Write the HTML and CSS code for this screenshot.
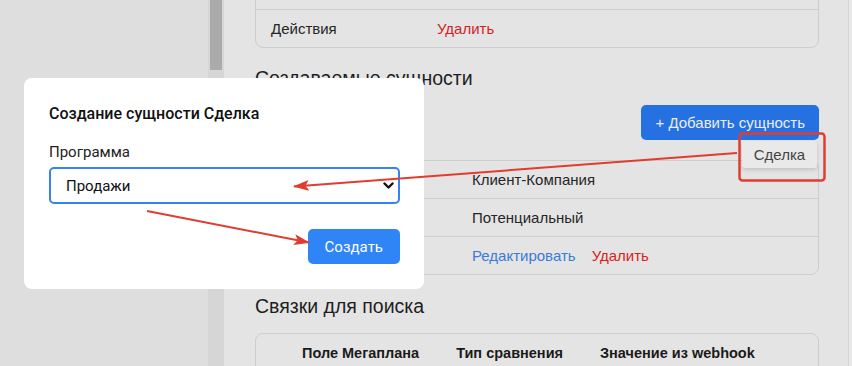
FILE: index.html
```html
<!DOCTYPE html>
<html lang="ru">
<head>
  <meta charset="UTF-8">
  <title>Создание сущности</title>
  <link rel="stylesheet" href="styles.css">
</head>
<body>

  <div class="page">
    <div class="sidebar"></div>
    <div class="scrollbar"><div class="thumb"></div></div>

    <div class="main">
      <div class="box box-first">
        <div class="row"></div>
        <div class="row"><span class="cell-name">Действия</span><a class="link-red">Удалить</a></div>
      </div>

      <h3 class="heading">Создаваемые сущности</h3>

      <div class="toolbar">
        <button class="btn-add">+ Добавить сущность</button>
        <div class="menu">Сделка</div>
      </div>

      <div class="box box-entities">
        <div class="row"><span class="cell-name">Тип</span><span>Клиент-Компания</span></div>
        <div class="row"><span class="cell-name">Статус</span><span>Потенциальный</span></div>
        <div class="row"><span class="cell-name">Действия</span><span class="actions"><a class="link-blue">Редактировать</a><a class="link-red">Удалить</a></span></div>
      </div>

      <h3 class="heading heading-search">Связки для поиска</h3>

      <div class="box box-search">
        <div class="row row-head">
          <span>Поле Мегаплана</span>
          <span>Тип сравнения</span>
          <span>Значение из webhook</span>
        </div>
        <div class="row"></div>
      </div>
    </div>
    <div class="edge"></div>
  </div>

  <!-- модальное окно -->
  <div class="modal">
    <h4 class="modal-title">Создание сущности Сделка</h4>
    <label class="modal-label" for="programma">Программа</label>
    <div class="select-wrap">
      <select id="programma" class="select">
        <option>Продажи</option>
      </select>
      <svg class="chevron" width="11" height="8" viewBox="0 0 11 8"><path d="M1.5 1.5l4 4 4-4" fill="none" stroke="#111" stroke-width="2.4" stroke-linecap="round" stroke-linejoin="round"/></svg>
    </div>
    <div class="modal-footer">
      <button class="btn-create">Создать</button>
    </div>
  </div>

  <!-- пометки поверх скриншота -->
  <svg class="marks" width="852" height="366" viewBox="0 0 852 366">
    <defs>
      <marker id="head" markerUnits="userSpaceOnUse" markerWidth="16" markerHeight="12" refX="15" refY="6" orient="auto">
        <path d="M0 0.5L16 6L0 11.5L3.5 6z" fill="#e23b30"/>
      </marker>
    </defs>
    <rect x="739.5" y="133.5" width="85" height="47" rx="3" fill="none" stroke="#e23b30" stroke-width="2.5"/>
    <line x1="737" y1="153" x2="294" y2="186.5" stroke="#e23b30" stroke-width="2" marker-end="url(#head)"/>
    <line x1="147" y1="211" x2="309" y2="242.5" stroke="#e23b30" stroke-width="2" marker-end="url(#head)"/>
  </svg>

</body>
</html>
```

FILE: styles.css
```css
body { margin: 0; font-family: "Liberation Sans", Arial, sans-serif; overflow: hidden; }
.page { display: flex; height: 366px; }
.sidebar { width: 208px; background: #dedede; }
.scrollbar { width: 16px; background: #d6d6d6; }
.thumb { margin: 0 2px; height: 70px; background: #ababab; }
.main {
  flex: 1;
  background: #e4e4e4;
  padding: 0 29px 0 31px;
  border-right: 1px solid #d5d5d5;
  overflow: hidden;
}
.edge { width: 3px; background: #e9e9e9; }

.box { border: 1px solid #cdcdcd; border-radius: 8px; }
.box-first { margin-top: -29px; }
.row {
  display: flex;
  align-items: center;
  height: 37px;
  padding-left: 15px;
  font-size: 15px;
  color: #262626;
}
.row + .row { border-top: 1px solid #cfcfcf; }
.box-first .cell-name { width: 166px; }
.box-entities .cell-name { width: 201px; }
.actions { display: flex; gap: 16px; }
.link-red { color: #d61e1e; }
.link-blue { color: #3b7bd8; }

.heading {
  margin: 20px 0 0;
  font-size: 19.5px;
  line-height: 20px;
  font-weight: normal;
  color: #1e1e1e;
}
.heading-search { margin-top: 21px; }

.toolbar { position: relative; display: flex; justify-content: flex-end; margin-top: 17px; }
.btn-add {
  height: 35px;
  padding: 0 14px;
  border: 0;
  border-radius: 5px;
  background: #2671e1;
  color: #ededed;
  font: 15px "Liberation Sans", Arial, sans-serif;
}
.menu {
  position: absolute;
  top: 36px;
  right: 2px;
  width: 75px;
  height: 27px;
  line-height: 27px;
  text-align: center;
  font-size: 15px;
  color: #444;
  background: #e9e9e9;
  border-radius: 3px;
  box-shadow: 0 2px 4px rgba(0, 0, 0, 0.15);
}

.box-entities { margin-top: 20px; }
.box-search { margin-top: 17px; }
.row-head { padding-left: 46px; gap: 37px; font-size: 14.5px; font-weight: bold; color: #1a1a1a; }

/* модалка */
.modal {
  position: absolute;
  left: 24px;
  top: 78px;
  width: 400px;
  box-sizing: border-box;
  padding: 26px 24px 25px 25px;
  background: #fff;
  border-radius: 8px;
  font-family: Roboto, sans-serif;
}
.modal-title { margin: 0 0 19px; font-size: 16px; line-height: 20px; font-weight: 500; color: #111; }
.modal-label { display: block; margin-bottom: 6px; font-size: 15px; line-height: 18px; color: #222; }
.select-wrap { position: relative; }
.select {
  appearance: none;
  width: 100%;
  height: 37px;
  padding: 0 15px;
  border: 2px solid #3383f2;
  border-radius: 5px;
  background: #fff;
  font: 15px Roboto, sans-serif;
  color: #111;
}
.chevron { position: absolute; right: 6px; top: 15px; }
.modal-footer { display: flex; justify-content: flex-end; margin-top: 25px; }
.btn-create {
  height: 35px;
  padding: 0 17px;
  border: 0;
  border-radius: 5px;
  background: #2f85f6;
  color: #fff;
  font: 15px Roboto, sans-serif;
}

.marks { position: absolute; left: 0; top: 0; pointer-events: none; }
```
